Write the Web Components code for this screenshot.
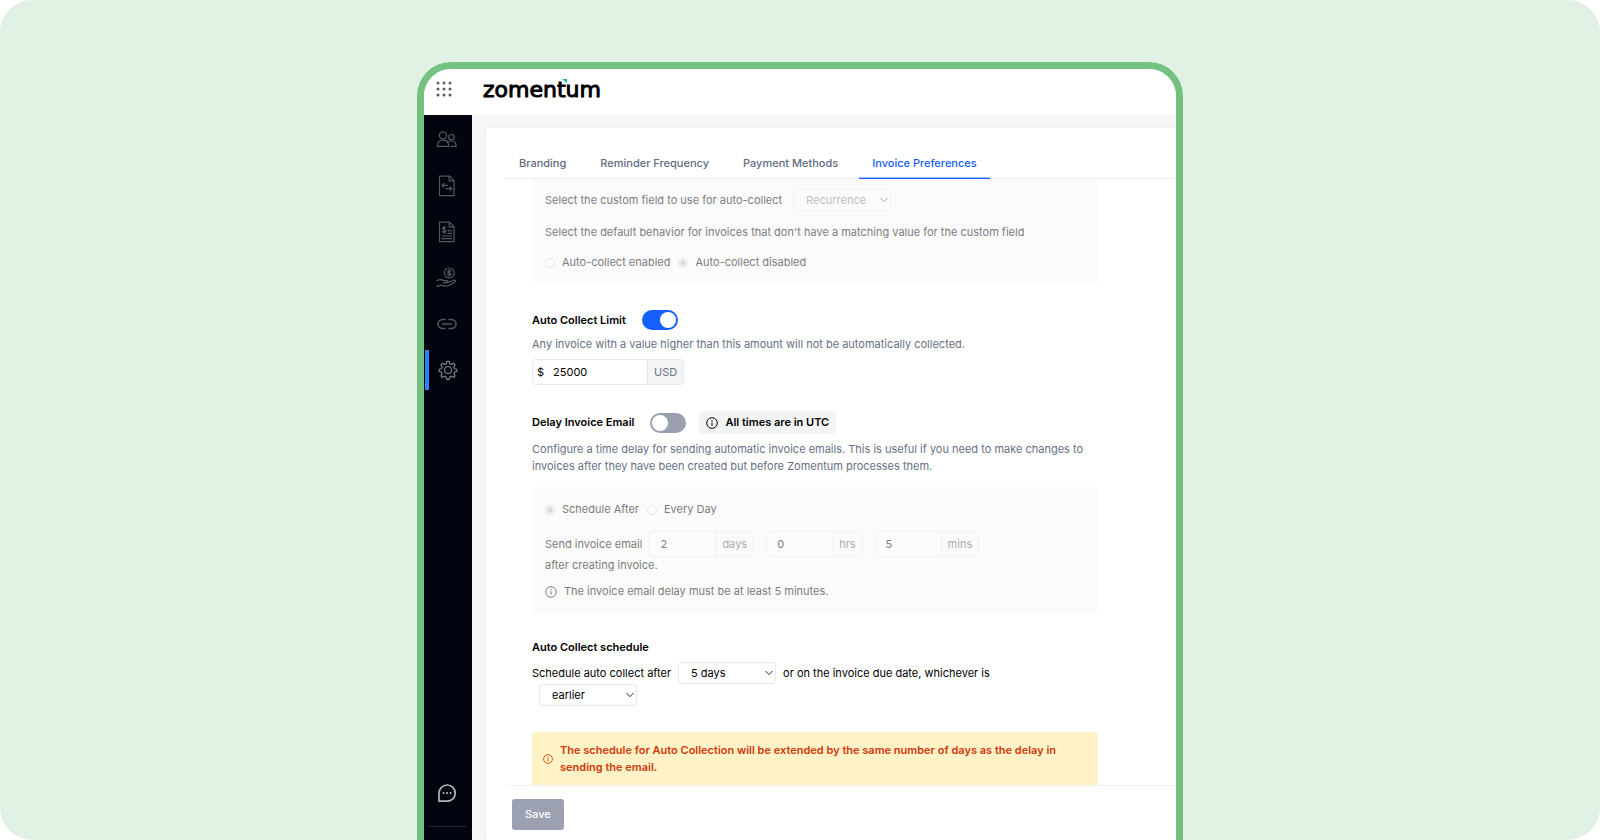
<!DOCTYPE html>
<html lang="en">
<head>
<meta charset="utf-8">
<meta name="viewport" content="width=device-width, initial-scale=1">
<title>Zomentum – Invoice Preferences</title>
<style>
  html, body { margin: 0; height: 100%; background: #fff; }
  body { font: 11px/17px Inter, "Liberation Sans", sans-serif; color: #000; }
</style>
</head>
<body>
<zm-stage>
  <zm-window>
    <zm-header slot="header"></zm-header>
    <zm-sidebar slot="sidebar"></zm-sidebar>
    <zm-card>
      <zm-tabs slot="tabs"></zm-tabs>
      <zm-preferences></zm-preferences>
      <zm-button slot="footer">Save</zm-button>
    </zm-card>
  </zm-window>
</zm-stage>

<script>
const define = (name, html, setup) => {
  const template = document.createElement('template');
  template.innerHTML = html;
  customElements.define(name, class extends HTMLElement {
    connectedCallback() {
      if (this.shadowRoot) return;
      const root = this.attachShadow({ mode: 'open' });
      root.append(template.content.cloneNode(true));
      if (setup) setup(this, root);
    }
  });
};

/* Pale green backdrop with rounded corners */
define('zm-stage', `
<style>
  :host { display: flex; justify-content: center; box-sizing: border-box; height: 100vh; padding: 62px 24px 0;
          background: #e1f2e5; border-radius: 32px; overflow: hidden; }
  ::slotted(*) { flex: 1; max-width: 766px; }
</style>
<slot></slot>`);

/* Application window with a green outline */
define('zm-window', `
<style>
  :host { display: flex; flex-direction: column; box-sizing: border-box; min-width: 0;
          border: 7px solid #74c282; border-bottom: 0; border-radius: 34px 34px 0 0;
          background: #f7f7f7; overflow: hidden; }
  .body { flex: 1; display: flex; min-height: 0; }
  main { flex: 1; display: flex; min-width: 0; padding: 13px 0 0 14px; }
  ::slotted(zm-card) { flex: 1; }
</style>
<slot name="header"></slot>
<div class="body"><slot name="sidebar"></slot><main><slot></slot></main></div>`);

define('zm-header', `
<style>
  :host { display: block; background: #fff; }
  header { display: flex; align-items: center; box-sizing: border-box; height: 46px; padding: 0 12px 6px; gap: 31px; }
  button { display: block; border: 0; padding: 0; background: none; width: 16px; height: 16px; }
  svg { display: block; }
  .logo { position: relative; padding-top: 2px; color: #000; text-decoration: none; font: 22px/24px "DejaVu Sans", sans-serif; -webkit-text-stroke: 1px #000; }
  .logo svg { position: absolute; left: 79px; top: 3px; }
</style>
<header>
  <button aria-label="Apps"><svg width="16" height="16" viewBox="0 0 16 16" fill="#5c5c5c">
    <circle cx="2" cy="2" r="1.5"/><circle cx="8" cy="2" r="1.5"/><circle cx="14" cy="2" r="1.5"/>
    <circle cx="2" cy="8" r="1.5"/><circle cx="8" cy="8" r="1.5"/><circle cx="14" cy="8" r="1.5"/>
    <circle cx="2" cy="14" r="1.5"/><circle cx="8" cy="14" r="1.5"/><circle cx="14" cy="14" r="1.5"/>
  </svg></button>
  <a class="logo" href="#">zomentum<svg width="5" height="4" viewBox="0 0 5 4"><path d="M0 0h5v4z" fill="#12c896"/><path d="M3 0h2v4z" fill="#2f8bf0"/></svg></a>
</header>`);

const icons = {
  people: '<circle cx="7" cy="6.500" r="3.600"/><path d="M1.200 17.400c0-4 2.300-6.300 5.800-6.300s5.800 2.300 5.800 6.300z"/><circle cx="15.400" cy="8.200" r="2.700"/><path d="M13 12.600c.7-.4 1.500-.6 2.400-.6 3 0 4.700 2 4.700 5.400h-5"/>',
  transfer: '<path d="M3.500 1.200h10l4.500 4.500v15H3.500z"/><path d="M13.200 1.400v4.500h4.600M8 8.300L6 10.300l2 2M6 10.300h5.500M13.800 11.700l2 2-2 2M15.800 13.700H10"/>',
  invoice: '<path d="M3.500 1.200h10l4.500 4.500v15H3.500z"/><path d="M13.200 1.400v4.500h4.600M6 15h9.500M6 17.700h9.500M12 12.300h3.500M12 9.600h3.500M9.700 6.800c-.4-.7-3-1-3.100.6 0 1.700 3.200 1 3.200 2.800 0 1.600-2.900 1.400-3.400.4M8.200 5.300v7"/>',
  payout: '<circle cx="13.200" cy="5.900" r="4.900"/><path d="M14.800 4.300c-.5-.9-3.100-.9-3.100.5 0 1.500 3.200.8 3.200 2.300 0 1.300-2.700 1.300-3.300.3M13.200 2.800v6.300M1 13.600c2.400-1.200 4.600-1.300 6.600.1h3.200c1.600 0 1.500 2 0 2H7.500M12 15.200l6-2c1.600-.5 2.400.8 1.200 1.600L13 18.600c-1.300.8-3 .8-4.500.3-2.500-.8-5-.8-7.500.5"/>',
  link: '<path d="M9 6.500H6.500a4.500 4.500 0 0 0 0 9H9M13 6.500h2.500a4.500 4.500 0 0 1 0 9H13M6.700 11h8.600" stroke-width="1.500"/>',
  gear: '<circle cx="11" cy="11" r="3.800"/><path d="M9.700 1.500h2.600l.4 2.500 2.300 1 2.100-1.500 1.800 1.800-1.500 2.100 1 2.300 2.400.4v2.600l-2.400.4-1 2.300 1.500 2.100-1.800 1.800L15 17.900l-2.300 1-.4 2.400H9.700l-.4-2.400-2.300-1-2.100 1.400-1.800-1.800 1.500-2.100-1-2.300-2.400-.4v-2.600l2.400-.4 1-2.300-1.500-2.100 1.800-1.800L7 5l2.300-1z"/>',
  chat: '<path d="M3 19.200V11a8.100 8.100 0 1 1 8.100 8.200z" stroke-width="1.700"/><path d="M7.500 11h.1M11 11h.1M14.500 11h.1" stroke-width="2"/>'
};

define('zm-nav-item', `
<style>
  :host { display: block; }
  a { display: flex; align-items: center; justify-content: center; height: 40px; color: #55585e; border-left: 4px solid transparent; padding-right: 6px; }
  :host([active]) a { color: #85878c; border-color: #2f80ff; padding-right: 4px; }
  :host([bright]) a { color: #b4b4b6; padding-right: 4px; }
  svg { display: block; fill: none; stroke: currentColor; stroke-width: 1.2; stroke-linecap: round; stroke-linejoin: round; }
  :host([active]) svg { width: 20px; height: 20px; }
</style>
<a href="#"><svg width="22" height="22" viewBox="0 0 22 22"></svg></a>`, (host, root) => {
  root.querySelector('svg').innerHTML = icons[host.getAttribute('icon')];
  root.querySelector('a').setAttribute('aria-label', host.getAttribute('label'));
});

define('zm-sidebar', `
<style>
  :host { display: block; width: 48px; background: #02050f; }
  nav { display: flex; flex-direction: column; gap: 6px; box-sizing: border-box; height: 100%; padding: 5px 1px 0; }
  .bottom { margin-top: auto; padding: 0 2px 13px 0; }
  hr { border: 0; border-top: 1px solid #1d2330; margin: 13px 3px 0; }
</style>
<nav aria-label="Main">
  <zm-nav-item icon="people" label="Customers"></zm-nav-item>
  <zm-nav-item icon="transfer" label="Quotes"></zm-nav-item>
  <zm-nav-item icon="invoice" label="Invoices"></zm-nav-item>
  <zm-nav-item icon="payout" label="Payments"></zm-nav-item>
  <zm-nav-item icon="link" label="Integrations"></zm-nav-item>
  <zm-nav-item icon="gear" label="Settings" active></zm-nav-item>
  <div class="bottom"><zm-nav-item icon="chat" label="Chat" bright></zm-nav-item><hr></div>
</nav>`);

define('zm-card', `
<style>
  :host { display: flex; flex-direction: column; box-sizing: border-box; min-width: 0; padding: 18px 0 0 20px;
          background: #fff; border-radius: 4px 0 0 0; box-shadow: 0 0 8px #0000000d; }
  .scroll { flex: 1; min-height: 0; overflow: hidden; padding: 0 78px 0 26px; }
  footer { border-top: 1px solid #f1f1f3; padding: 13px 6px 10px; }
</style>
<slot name="tabs"></slot>
<div class="scroll"><slot></slot></div>
<footer><slot name="footer"></slot></footer>`);

define('zm-tabs', `
<style>
  :host { display: block; }
  nav { display: flex; gap: 8px; border-bottom: 1px solid #ececee; }
  a { padding: 9px 13px 6px; border-bottom: 1px solid transparent; margin-bottom: -1px; color: #636b80;
      text-decoration: none; font-weight: 500; white-space: nowrap; }
  a[aria-current] { color: #155eff; border-color: #155eff; box-shadow: inset 0 -1px #155eff66; }
</style>
<nav aria-label="Settings sections">
  <a href="#">Branding</a><a href="#">Reminder Frequency</a><a href="#">Payment Methods</a><a href="#" aria-current="page">Invoice Preferences</a>
</nav>`);

/* Grey area that groups controls which are switched off */
define('zm-panel', `
<style>
  :host { display: block; background: #fbfbfb; color: #7d7d7d; border-radius: 4px; padding: 13px; }
  :host([flush]) { border-radius: 0 0 4px 4px; }
</style>
<slot></slot>`);

define('zm-select', `
<style>
  :host { display: inline-grid; width: 98px; height: 22px; vertical-align: top; }
  select, svg { grid-area: 1 / 1; }
  select { appearance: none; box-sizing: border-box; width: 100%; height: 100%; margin: 0; padding: 0 20px 0 12px;
           border: 1px solid #e7e9ec; border-radius: 4px; background: #fff; color: #000; font: inherit; opacity: 1; }
  select:disabled { background: #fbfbfb; border-color: #f3f3f4; color: #bdbdbd; }
  svg { justify-self: end; align-self: center; margin-right: 3px; pointer-events: none; fill: none; stroke: #333; }
  :host([disabled]) svg { stroke: #a5a5a5; }
</style>
<select><option></option></select>
<svg width="8" height="6" viewBox="0 0 8 6"><path d="M.5 1L4 4.700 7.500 1"/></svg>`, (host, root) => {
  const select = root.querySelector('select');
  select.options[0].textContent = host.getAttribute('value');
  select.setAttribute('aria-label', host.getAttribute('label'));
  select.disabled = host.hasAttribute('disabled');
});

define('zm-radios', `
<style>
  :host { display: block; }
  fieldset { display: flex; gap: 8px; border: 0; margin: 0; padding: 0; }
  label { display: flex; align-items: center; gap: 7px; }
  input { appearance: none; box-sizing: border-box; width: 10px; height: 10px; margin: 0; border: 1px solid #e6e6e6; border-radius: 50%; background: #fdfdfd; }
  input:checked { background: radial-gradient(#d9d9d9 0 2px, #f3f3f3 3px); }
</style>
<fieldset disabled></fieldset>`, (host, root) => {
  const set = root.querySelector('fieldset');
  set.setAttribute('aria-label', host.getAttribute('label'));
  host.getAttribute('options').split('|').forEach((text, i) => {
    const label = document.createElement('label');
    const input = document.createElement('input');
    input.type = 'radio';
    input.name = 'choice';
    input.checked = i === Number(host.getAttribute('selected'));
    label.append(input, text);
    set.append(label);
  });
});

define('zm-toggle', `
<style>
  :host { display: block; }
  label { display: flex; align-items: center; gap: 16px; font-weight: 600; }
  input { appearance: none; display: flex; box-sizing: border-box; width: 36px; height: 20px; margin: 0; padding: 2px; border-radius: 10px; background: #9aa0b0; }
  input::before { content: ""; width: 16px; height: 16px; border-radius: 50%; background: #fff; }
  input:checked { background: #155eff; justify-content: flex-end; }
</style>
<label><slot></slot><input type="checkbox" role="switch"></label>`, (host, root) => {
  const input = root.querySelector('input');
  input.checked = host.hasAttribute('checked');
  input.setAttribute('aria-label', host.textContent);
});

define('zm-unit-input', `
<style>
  :host { display: inline-block; vertical-align: top; }
  label { display: flex; box-sizing: border-box; height: 26px; border: 1px solid #e5e7eb; border-radius: 4px; overflow: hidden; background: #fff; line-height: 24px; }
  input { box-sizing: border-box; width: 65px; margin: 0; padding: 0 10px; border: 0; background: none; font: inherit; color: inherit; }
  .unit { padding: 0 6px; border-left: 1px solid #e5e7eb; background: #f3f4f6; color: #6b7280; }
  .prefix { padding-left: 4px; }
  .prefix:empty { display: none; }
  :host([prefix]) input { width: 103px; padding: 0 9px; }
  :host([disabled]) label { background: #fcfcfc; border-color: #f1f1f2; }
  :host([disabled]) .unit { background: #fafafa; border-color: #f1f1f2; color: #a9adb6; }
</style>
<label><span class="prefix"></span><input type="text" inputmode="numeric"><span class="unit"></span></label>`, (host, root) => {
  const input = root.querySelector('input');
  input.value = host.getAttribute('value');
  input.disabled = host.hasAttribute('disabled');
  root.querySelector('.prefix').textContent = host.getAttribute('prefix') || '';
  root.querySelector('.unit').textContent = host.getAttribute('unit');
});

define('zm-info', `
<style>
  :host { display: flex; align-items: center; gap: 7px; }
  svg { flex: none; width: 12px; height: 12px; fill: none; stroke: currentColor; }
  :host([kind=badge]) { background: #f3f4f6; border-radius: 4px; padding: 3px 7px; font-weight: 600; }
  :host([kind=warning]) { background: #fff2c6; color: #cf3a0b; border-radius: 4px; padding: 10px 11px; font-weight: 600; }
  :host([kind=warning]) svg { width: 10px; height: 10px; }
</style>
<svg viewBox="0 0 12 12" aria-hidden="true"><circle cx="6" cy="6" r="5.300"/><path d="M6 5.200v3.600M6 3v1.200"/></svg>
<span><slot></slot></span>`);

define('zm-button', `
<style>
  :host { display: block; }
  button { display: block; height: 31px; padding: 0 13px; border: 0; border-radius: 3px; background: #9ca1b1; color: #fff; font: inherit; font-weight: 500; }
</style>
<button type="button"><slot></slot></button>`);

define('zm-preferences', `
<style>
  :host { display: block; }
  .field { display: flex; align-items: center; gap: 11px; }
  p { margin: 0; }
  h2 { margin: 0; font: inherit; font-weight: 600; }
  section { margin-top: 26px; }
  .muted { color: #667085; }
  .head { display: flex; align-items: center; gap: 13px; }
  .flow { line-height: 22px; }
  .flow zm-select { margin: 0 7px; line-height: 17px; }
  .custom { padding-top: 10px; }
  .custom p { margin: 13px 0; }
  .limit p { margin: 6px 0; }
  .delay .muted { margin: 7px 0 12px; }
  .times { margin-top: 13px; column-gap: 12px; display: flex; flex-wrap: wrap; align-items: center; }
  .times span { margin-right: -5px; }
  .delay zm-panel { padding-top: 14px; }
  .note { margin-top: 9px; }
  .schedule .flow { margin-top: 6px; }
</style>
<zm-panel class="custom" flush>
  <div class="field"><span>Select the custom field to use for auto-collect</span><zm-select disabled value="Recurrence" label="Custom field for auto-collect"></zm-select></div>
  <p>Select the default behavior for invoices that don't have a matching value for the custom field</p>
  <zm-radios label="Default behavior" options="Auto-collect enabled|Auto-collect disabled" selected="1"></zm-radios>
</zm-panel>
<section class="limit">
  <zm-toggle checked>Auto Collect Limit</zm-toggle>
  <p class="muted">Any invoice with a value higher than this amount will not be automatically collected.</p>
  <zm-unit-input prefix="$" value="25000" unit="USD"></zm-unit-input>
</section>
<section class="delay">
  <div class="head"><zm-toggle>Delay Invoice Email</zm-toggle><zm-info kind="badge">All times are in UTC</zm-info></div>
  <p class="muted">Configure a time delay for sending automatic invoice emails. This is useful if you need to make changes to invoices after they have been created but before Zomentum processes them.</p>
  <zm-panel>
    <zm-radios label="Email delay" options="Schedule After|Every Day" selected="0"></zm-radios>
    <div class="times">
      <span>Send invoice email</span>
      <zm-unit-input disabled value="2" unit="days"></zm-unit-input>
      <zm-unit-input disabled value="0" unit="hrs"></zm-unit-input>
      <zm-unit-input disabled value="5" unit="mins"></zm-unit-input>
    </div>
    <p>after creating invoice.</p>
    <zm-info class="note">The invoice email delay must be at least 5 minutes.</zm-info>
  </zm-panel>
</section>
<section class="schedule">
  <h2>Auto Collect schedule</h2>
  <div class="flow">Schedule auto collect after<zm-select value="5 days" label="Auto collect after"></zm-select>or on the invoice due date, whichever is <zm-select value="earlier" label="Whichever is"></zm-select></div>
</section>
<section><zm-info kind="warning">The schedule for Auto Collection will be extended by the same number of days as the delay in sending the email.</zm-info></section>`);
</script>
</body>
</html>
